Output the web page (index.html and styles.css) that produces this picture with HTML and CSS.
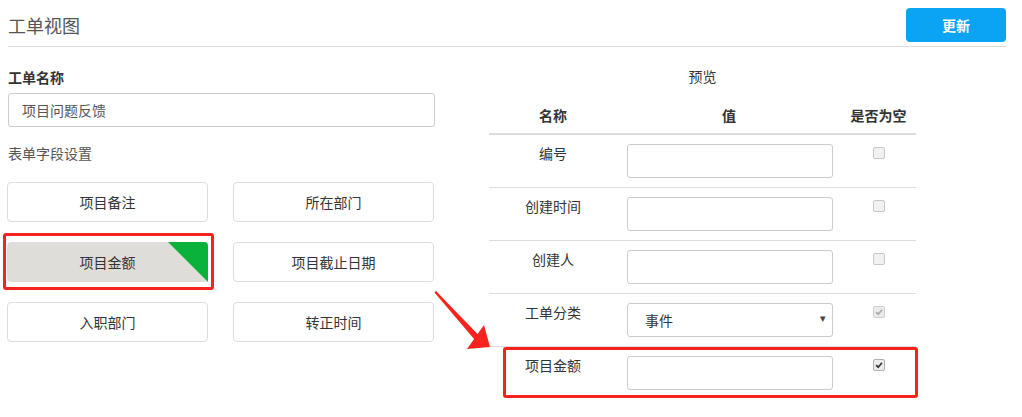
FILE: index.html
```html
<!DOCTYPE html>
<html lang="zh">
<head>
<meta charset="utf-8">
<link rel="stylesheet" href="styles.css">
</head>
<body>
<div class="page">
  <header class="topbar">
    <h1 class="title">工单视图</h1>
    <button class="btn-primary">更新</button>
  </header>
  <main class="main">
    <section class="left">
      <div class="label-strong">工单名称</div>
      <div class="text-input">项目问题反馈</div>
      <div class="label">表单字段设置</div>
      <div class="field-grid">
        <div class="field-btn">项目备注</div>
        <div class="field-btn">所在部门</div>
        <div class="field-btn selected"><span class="corner"></span>项目金额</div>
        <div class="field-btn">项目截止日期</div>
        <div class="field-btn">入职部门</div>
        <div class="field-btn">转正时间</div>
      </div>
    </section>
    <section class="right">
      <div class="preview-title">预览</div>
      <table class="preview">
        <thead>
          <tr><th class="c1">名称</th><th class="c2">值</th><th class="c3">是否为空</th></tr>
        </thead>
        <tbody>
          <tr><td class="c1">编号</td><td class="c2"><div class="cell-input"></div></td><td class="c3"><span class="cb"></span></td></tr>
          <tr><td class="c1">创建时间</td><td class="c2"><div class="cell-input"></div></td><td class="c3"><span class="cb"></span></td></tr>
          <tr><td class="c1">创建人</td><td class="c2"><div class="cell-input"></div></td><td class="c3"><span class="cb"></span></td></tr>
          <tr><td class="c1">工单分类</td><td class="c2"><div class="cell-input select"><span>事件</span><span class="caret">▾</span></div></td><td class="c3"><span class="cb checked disabled"><svg viewBox="0 0 12 12"><path d="M2.5 6.2 L5 8.6 L9.6 3.2" /></svg></span></td></tr>
          <tr class="last"><td class="c1">项目金额</td><td class="c2"><div class="cell-input"></div></td><td class="c3"><span class="cb checked"><svg viewBox="0 0 12 12"><path d="M2.5 6.2 L5 8.6 L9.6 3.2" /></svg></span></td></tr>
        </tbody>
      </table>
      <div class="row-highlight"></div>
    </section>
  </main>
  <svg class="arrow" width="1022" height="417" viewBox="0 0 1022 417">
    <polygon points="434.5,292.5 436,291 478.5,335 474.5,339.5" fill="#f5231b"/>
    <polygon points="467,349 484,325 490,347" fill="#f5231b"/>
  </svg>
</div>
</body>
</html>
```
FILE: styles.css
```css
* { box-sizing: border-box; }
html, body { margin: 0; padding: 0; background: #fff; }
body {
  font-family: "Microsoft YaHei", "Noto Sans CJK SC", "Noto Sans", sans-serif;
  font-size: 14px;
  color: #333;
  line-height: 20px;
}
.page {
  position: relative;
  width: 1022px;
  height: 417px;
  padding: 0 16px 0 8px;
  overflow: hidden;
}
.topbar {
  display: flex;
  align-items: center;
  justify-content: space-between;
  height: 47px;
  padding-top: 7px;
  padding-bottom: 4px;
  border-bottom: 1px solid #ddd;
}
.title {
  margin: 0;
  font-size: 18px;
  font-weight: normal;
  color: #555;
  line-height: 24px;
}
.btn-primary {
  width: 100px;
  height: 34px;
  border: none;
  border-radius: 4px;
  background: #0ba3f3;
  color: #fff;
  font-family: inherit;
  font-size: 14px;
  font-weight: bold;
  padding: 0;
}
.main {
  display: flex;
  gap: 54px;
}
.left { width: 427px; }
.label-strong {
  margin-top: 20px;
  font-weight: bold;
  color: #333;
}
.text-input {
  margin-top: 6px;
  height: 34px;
  border: 1px solid #ccc;
  border-radius: 3px;
  padding: 6px 13px;
  color: #555;
}
.label {
  margin-top: 16px;
  color: #555;
}
.field-grid {
  margin-top: 19px;
  margin-left: -1px;
  display: grid;
  grid-template-columns: 201px 201px;
  column-gap: 25px;
  row-gap: 20px;
}
.field-btn {
  position: relative;
  height: 40px;
  border: 1px solid #ddd;
  border-radius: 4px;
  display: flex;
  align-items: center;
  justify-content: center;
  color: #333;
}
.field-btn.selected {
  background: #dfddd9;
  border-color: #dfddd9;
}
.field-btn.selected::after {
  content: "";
  position: absolute;
  left: -5px;
  top: -10px;
  right: -7px;
  bottom: -9px;
  border: 3px solid #f5231b;
  border-radius: 3px;
}
.corner {
  position: absolute;
  top: -1px;
  right: -1px;
  width: 40px;
  height: 40px;
  background: #0bb23a;
  clip-path: polygon(0 0, 100% 0, 100% 100%);
  border-top-right-radius: 4px;
}
.right {
  position: relative;
  width: 427px;
}
.preview-title {
  margin-top: 19px;
  text-align: center;
  color: #333;
}
.preview {
  margin-top: 10px;
  width: 427px;
  border-collapse: collapse;
  table-layout: fixed;
}
.preview .c1 { width: 128px; text-align: center; }
.preview .c2 { width: 224px; }
.preview .c3 { width: 75px; text-align: center; }
.preview th {
  font-weight: bold;
  padding: 9px 0 8px;
  border-bottom: 2px solid #ddd;
  color: #333;
}
.preview th.c2 { text-align: center; }
.preview td {
  border-bottom: 1px solid #ddd;
  vertical-align: top;
  padding: 9px 0 9px;
  color: #333;
}
.preview td.c1 { padding-top: 8px; }
.preview td.c2 { padding-left: 10px; padding-right: 8px; }
.preview td.c3 { padding-top: 12px; }
.preview tr.last td { border-bottom: none; }
.cell-input {
  height: 34px;
  width: 206px;
  border: 1px solid #ccc;
  border-radius: 3px;
  background: #fff;
}
.cell-input.select {
  display: flex;
  align-items: center;
  justify-content: space-between;
  padding: 0 6px 0 17px;
  color: #333;
}
.caret {
  font-size: 11px;
  color: #444;
  transform: translateY(-3px);
}
.cb {
  display: inline-block;
  width: 12px;
  height: 12px;
  border: 1px solid #c8c8c8;
  border-radius: 2px;
  background: #f1f1f1;
  vertical-align: top;
  margin-left: 1px;
}
.cb svg {
  display: block;
  width: 10px;
  height: 10px;
}
.cb path {
  fill: none;
  stroke: #333;
  stroke-width: 2;
}
.cb.disabled path { stroke: #a8a8a8; }
.cb.checked { background: #ececec; border-color: #b0b0b0; }
.cb.disabled { border-color: #cfcfcf; }
.row-highlight {
  position: absolute;
  left: 14px;
  top: 300px;
  width: 415px;
  height: 51px;
  border: 3px solid #f5231b;
  border-radius: 3px;
  pointer-events: none;
}
.arrow {
  position: absolute;
  left: 0;
  top: 0;
  pointer-events: none;
}
```
